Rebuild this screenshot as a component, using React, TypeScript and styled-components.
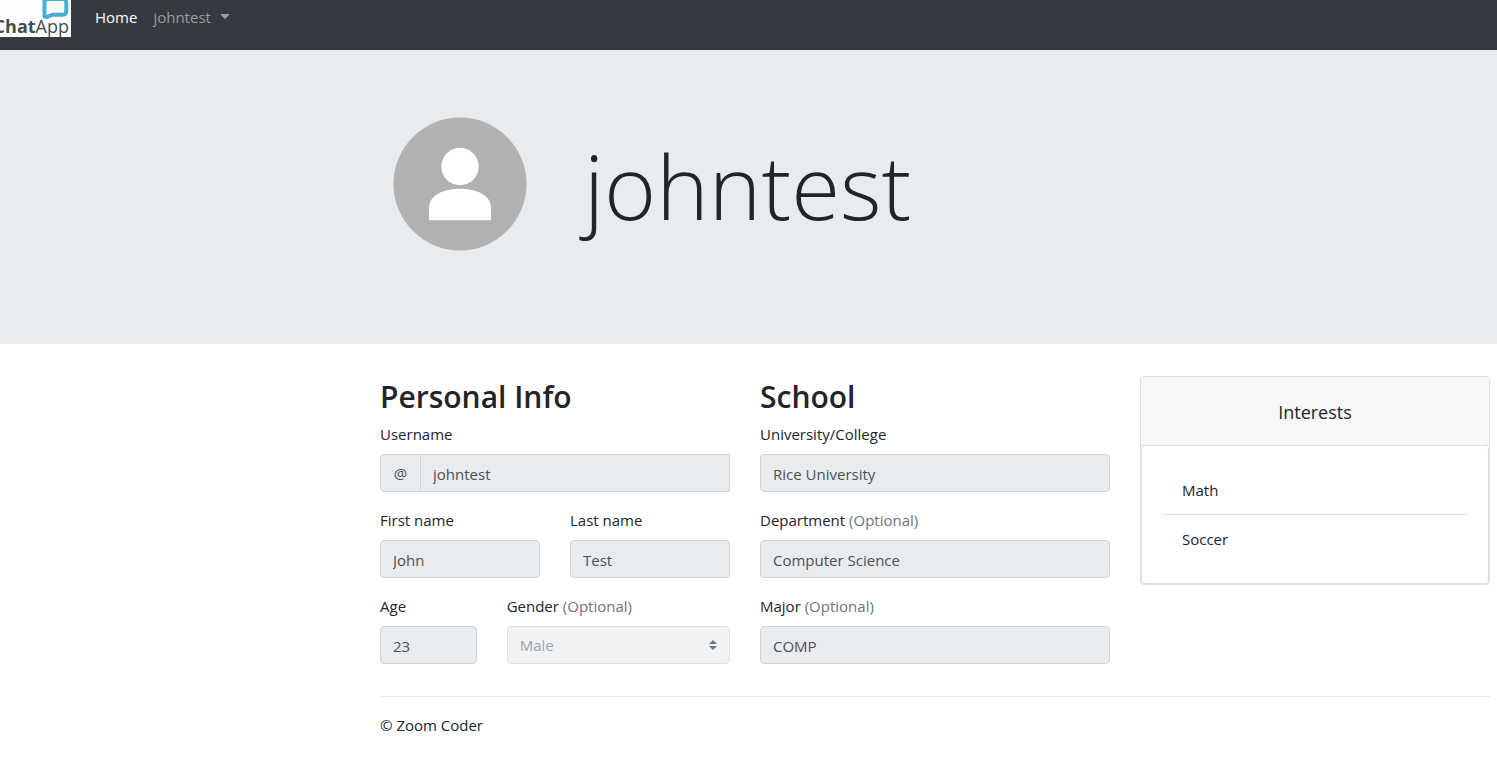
import React from "react";
import styled, { createGlobalStyle } from "styled-components";

const GlobalStyle = createGlobalStyle`
  *, *::before, *::after { box-sizing: border-box; }
  body {
    margin: 0;
    background: #fff;
    color: #212529;
    font-family: "Segoe UI", "Open Sans", "Noto Sans", sans-serif;
    font-size: 15px;
    line-height: 24px;
  }
  button, input, select { font: inherit; }
`;

const Navbar = styled.nav`
  display: flex;
  align-items: flex-start;
  height: 50px;
  background: #343a40;
`;

const Brand = styled.a`
  display: block;
  height: 37px;
  margin-right: 24px;
`;

const NavList = styled.ul`
  display: flex;
  gap: 16px;
  margin: 0;
  padding: 5px 0 0;
  list-style: none;
`;

const NavLink = styled.a`
  color: #fff;
  text-decoration: none;
`;

const NavToggle = styled.button`
  display: flex;
  align-items: center;
  gap: 9px;
  padding: 0;
  border: 0;
  background: none;
  color: #9a9da0;
  line-height: 24px;

  &::after {
    content: "";
    margin-bottom: 2px;
    border-top: 5px solid;
    border-left: 5px solid transparent;
    border-right: 5px solid transparent;
  }
`;

const Banner = styled.header`
  display: flex;
  align-items: flex-start;
  gap: 44px;
  height: 294px;
  padding: 54px 7px 0 380px;
  background: #e9ecef;
`;

const DisplayName = styled.h1`
  margin: 0;
  font-size: 89px;
  font-weight: 300;
  line-height: 164px;
`;

const Content = styled.main`
  padding: 32px 7px 0 380px;
`;

const Columns = styled.div`
  display: grid;
  grid-template-columns: repeat(3, minmax(0, 1fr));
  align-items: start;
  gap: 30px;
`;

const SectionTitle = styled.h2`
  margin: 0 0 4px;
  font-size: 30px;
  font-weight: 600;
  line-height: 42px;
`;

const FieldRow = styled.div`
  display: flex;
  gap: 30px;
`;

const Field = styled.div<{ $third?: boolean }>`
  flex: ${(p) => (p.$third ? "0 0 calc(100% / 3 - 20px)" : "1 1 0")};
  min-width: 0;
  margin-bottom: 16px;
`;

const Label = styled.label`
  display: block;
  margin-bottom: 8px;
`;

const Muted = styled.span`
  color: #6c757d;
`;

const Input = styled.input`
  display: block;
  width: 100%;
  min-width: 0;
  height: 38px;
  padding: 8px 12px 6px;
  border: 1px solid #ced4da;
  border-radius: 4px;
  background: #e9ecef;
  color: #495057;
`;

const InputGroup = styled.div`
  display: flex;

  ${Input} {
    border-left: 0;
    border-radius: 0;
  }
`;

const Addon = styled.span`
  display: flex;
  align-items: center;
  justify-content: center;
  flex: 0 0 41px;
  border: 1px solid #ced4da;
  border-radius: 4px 0 0 4px;
  background: #e9ecef;
  color: #495057;
`;

const SelectBox = styled.div`
  display: grid;
  align-items: center;

  > * { grid-area: 1 / 1; }

  > svg {
    justify-self: end;
    margin-right: 13px;
    pointer-events: none;
  }
`;

const Select = styled.select`
  appearance: none;
  width: 100%;
  height: 38px;
  padding: 6px 28px 6px 12px;
  border: 1px solid #dee2e6;
  border-radius: 4px;
  background: #f0f2f4;
  color: #a0a4a8;
  opacity: 1;
`;

const Card = styled.section`
  border: 1px solid #dfdfdf;
  border-radius: 4px;
  background: #fff;
`;

const CardHeader = styled.h3`
  margin: 0;
  padding: 23px 20px 21px;
  border-bottom: 1px solid #dfdfdf;
  border-radius: 3px 3px 0 0;
  background: #f7f7f7;
  font-size: 18px;
  font-weight: 400;
  line-height: 24px;
  text-align: center;
`;

const InterestList = styled.ul`
  margin: 0;
  padding: 20px;
  border: 1px solid #dfdfdf;
  border-top: 0;
  border-radius: 4px;
  list-style: none;
`;

const Interest = styled.li`
  padding: 12px 20px;

  & + & { border-top: 1px solid #dfdfdf; }
`;

const Footer = styled.footer`
  margin-top: 16px;
  padding: 16px 0;
  border-top: 1px solid #e5e5e5;

  p { margin: 0; }
`;

const Logo = () => (
  <svg width="71" height="37" viewBox="0 0 71 37" role="img" aria-label="ChatApp">
    <rect width="71" height="37" fill="#fdfdfd" />
    <path
      d="M44.500 16.500V2Q44.500-1 48-1H63Q66.300-1 66.300 3V11Q66.300 14.700 62.500 14.700H52.500L47 17Z"
      fill="#fff"
      stroke="#45aed6"
      strokeWidth="4"
      strokeLinejoin="round"
    />
    <text x="69" y="33" textAnchor="end" fontFamily="Open Sans, sans-serif" fontSize="18" fill="#4c4c4e">
      <tspan fontWeight="700">Chat</tspan>
      <tspan>App</tspan>
    </text>
  </svg>
);

const Avatar = () => (
  <svg width="160" height="160" viewBox="0 0 160 160" role="img" aria-label="Profile picture">
    <circle cx="80" cy="80" r="66.500" fill="#b1b1b1" />
    <circle cx="80" cy="62.500" r="18.700" fill="#fff" />
    <path d="M49 116.200V104C49 91 64 84.800 80 84.800S111 91 111 104V116.200Z" fill="#fff" />
  </svg>
);

type TextFieldProps = { id: string; label: string; value: string; optional?: boolean; third?: boolean };

const TextField = ({ id, label, value, optional, third }: TextFieldProps) => (
  <Field $third={third}>
    <Label htmlFor={id}>
      {label} {optional && <Muted>(Optional)</Muted>}
    </Label>
    <Input id={id} defaultValue={value} disabled />
  </Field>
);

export default function App() {
  return (
    <>
      <GlobalStyle />
      <Navbar>
        <Brand href="#"><Logo /></Brand>
        <NavList>
          <li><NavLink href="#">Home</NavLink></li>
          <li><NavToggle type="button" aria-haspopup="true">johntest</NavToggle></li>
        </NavList>
      </Navbar>
      <Banner>
        <Avatar />
        <DisplayName>johntest</DisplayName>
      </Banner>
      <Content>
        <Columns>
          <section>
            <SectionTitle>Personal Info</SectionTitle>
            <Field>
              <Label htmlFor="username">Username</Label>
              <InputGroup>
                <Addon>@</Addon>
                <Input id="username" defaultValue="johntest" disabled />
              </InputGroup>
            </Field>
            <FieldRow>
              <TextField id="first" label="First name" value="John" />
              <TextField id="last" label="Last name" value="Test" />
            </FieldRow>
            <FieldRow>
              <TextField id="age" label="Age" value="23" third />
              <Field>
                <Label htmlFor="gender">Gender <Muted>(Optional)</Muted></Label>
                <SelectBox>
                  <Select id="gender" defaultValue="Male" disabled>
                    <option>Male</option>
                    <option>Female</option>
                  </Select>
                  <svg width="8" height="10" viewBox="0 0 4 5" aria-hidden="true">
                    <path d="M2 0L0 2h4zm0 5L0 3h4z" fill="#6f757b" />
                  </svg>
                </SelectBox>
              </Field>
            </FieldRow>
          </section>
          <section>
            <SectionTitle>School</SectionTitle>
            <TextField id="university" label="University/College" value="Rice University" />
            <TextField id="department" label="Department" value="Computer Science" optional />
            <TextField id="major" label="Major" value="COMP" optional />
          </section>
          <Card>
            <CardHeader>Interests</CardHeader>
            <InterestList>
              <Interest>Math</Interest>
              <Interest>Soccer</Interest>
            </InterestList>
          </Card>
        </Columns>
        <Footer><p>© Zoom Coder</p></Footer>
      </Content>
    </>
  );
}
